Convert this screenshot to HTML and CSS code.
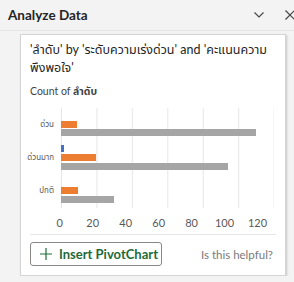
FILE: index.html
```html
<!DOCTYPE html>
<html lang="th">
<head>
  <meta charset="UTF-8">
  <meta name="viewport" content="width=device-width, initial-scale=1.0">
  <title>Analyze Data</title>
  <link rel="stylesheet" href="styles.css">
</head>
<body>

  <div class="pane-header">
    <h1>Analyze Data</h1>
    <div class="header-icons">
      <svg class="chevron" width="10" height="6" viewBox="0 0 10 6"><path d="M0.5 0.5 L5 5 L9.5 0.5" fill="none" stroke="#444" stroke-width="1.1"/></svg>
      <svg class="close" width="10" height="10" viewBox="0 0 10 10"><path d="M0.5 0.5 L9.5 9.5 M9.5 0.5 L0.5 9.5" fill="none" stroke="#444" stroke-width="1.2"/></svg>
    </div>
  </div>

  <div class="card">
    <p class="card-title">'ลำดับ' by 'ระดับความเร่งด่วน' and 'คะแนนความ<br>พึงพอใจ'</p>
    <p class="card-sub">Count of <b>ลำดับ</b></p>

    <div class="chart">
      <div class="cat-labels">
        <span>ด่วน</span>
        <span>ด่วนมาก</span>
        <span>ปกติ</span>
      </div>
      <div class="plot">
        <!-- widths are value / 120 -->
        <div class="group">
          <div class="bar blue" style="width:0%"></div>
          <div class="bar orange" style="width:7.5%"></div>
          <div class="bar grey" style="width:92%"></div>
        </div>
        <div class="group">
          <div class="bar blue" style="width:1.5%"></div>
          <div class="bar orange" style="width:16.3%"></div>
          <div class="bar grey" style="width:78.8%"></div>
        </div>
        <div class="group">
          <div class="bar blue" style="width:0%"></div>
          <div class="bar orange" style="width:8%"></div>
          <div class="bar grey" style="width:24.8%"></div>
        </div>
      </div>
      <div></div>
      <div class="axis">
        <span>0</span><span>20</span><span>40</span><span>60</span><span>80</span><span>100</span><span>120</span>
      </div>
    </div>

    <div class="card-footer">
      <button type="button" class="pivot-btn">
        <svg width="12" height="12" viewBox="0 0 12 12"><path d="M6 0 V12 M0 6 H12" stroke="#1e6b3a" stroke-width="1.2"/></svg>
        Insert PivotChart
      </button>
      <span class="helpful">Is this helpful?</span>
    </div>
  </div>

</body>
</html>
```

FILE: styles.css
```css
body {
  margin: 0;
  background-color: #f3f3f3;
  font-family: "Segoe UI", Lato, "Noto Sans Thai", "Noto Sans", Tahoma, sans-serif;
  color: #262626;
  overflow: hidden;
}

.pane-header {
  height: 30px;
  display: flex;
  align-items: center;
  justify-content: space-between;
  padding-left: 8px;
  border-bottom: 1px solid #e3e3e3;
}

.pane-header h1 {
  margin: 0;
  font-size: 13.5px;
  font-weight: 700;
  color: #252525;
}

.header-icons {
  display: flex;
  align-items: center;
  gap: 21px;
  margin-right: -1px;
}

.card {
  width: 266px;
  height: 242px;
  box-sizing: border-box;
  margin: 3px 0 0 20px;
  padding: 0 9px;
  background-color: #fff;
  border: 1px solid #d4d4d4;
  box-shadow: 1px 1px 2px rgba(0, 0, 0, 0.18);
  display: flex;
  flex-direction: column;
}

.card-title {
  margin: 6px 0 0;
  font-size: 12.5px;
  line-height: 18px;
  color: #252525;
}

.card-sub {
  margin: 7px 0 0;
  font-size: 10.5px;
  line-height: 15px;
  color: #444;
}

.card-sub b {
  font-weight: 700;
}

.chart {
  margin-top: 9px;
  display: grid;
  grid-template-columns: 24px 213px;
  column-gap: 7px;
}

.cat-labels {
  display: flex;
  flex-direction: column;
  align-items: flex-end;
}

.cat-labels span {
  height: 33px;
  display: flex;
  align-items: center;
  font-size: 8px;
  color: #595959;
  white-space: nowrap;
}

.plot {
  height: 100px;
  background-image: linear-gradient(to right, #e6e6e6 1px, transparent 1px);
  background-size: 35.45px 100%;
  padding-right: 1px;
}

.group {
  height: 33.3px;
  box-sizing: border-box;
  padding: 4px 0;
  display: flex;
  flex-direction: column;
  gap: 1.7px;
}

.bar {
  height: 7px;
}

.blue { background-color: #4472c4; }
.orange { background-color: #ed7d31; }
.grey { background-color: #a5a5a5; }

.axis {
  display: flex;
  margin: 7px 0 0 -17.7px;
}

.axis span {
  width: 35.45px;
  text-align: center;
  font-size: 11px;
  line-height: 15px;
  color: #595959;
}

.card-footer {
  margin-top: 4px;
  border-top: 1px solid #e6e6e6;
  padding-top: 7px;
  display: flex;
  align-items: center;
  justify-content: space-between;
}

.pivot-btn {
  width: 132px;
  height: 24px;
  display: flex;
  align-items: center;
  gap: 7px;
  padding: 0 9px;
  background-color: #fff;
  border: 1px solid #8a8886;
  border-radius: 3px;
  font-family: inherit;
  font-size: 13px;
  font-weight: 700;
  color: #1e6b3a;
  white-space: nowrap;
  cursor: pointer;
}

.pivot-btn svg {
  flex-shrink: 0;
}

.helpful {
  font-size: 11.5px;
  color: #7a7a7a;
  margin-right: 3px;
}
```
